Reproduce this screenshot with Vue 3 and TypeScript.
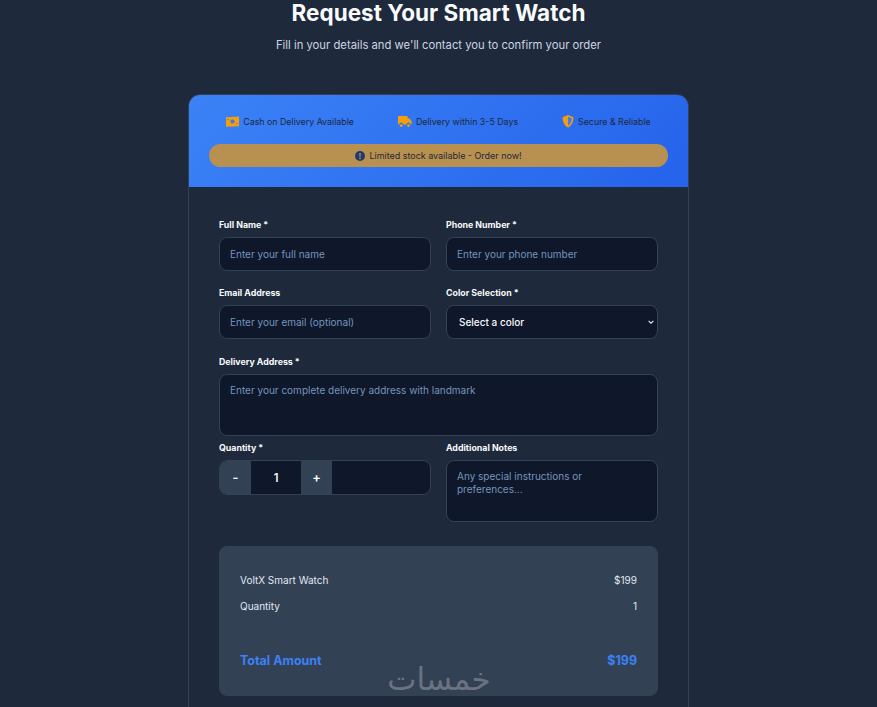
<template>
  <div class="page">
    <h1>Request Your Smart Watch</h1>
    <p class="sub">Fill in your details and we'll contact you to confirm your order</p>

    <div class="card">
      <div class="head">
        <div class="perks">
          <div class="perk">
            <svg width="13" height="11" viewBox="0 0 13 11">
              <path fill="#f59e0b" d="M0 1.200 13 .4v9.800L0 10.800z" />
              <circle cx="6.500" cy="5.500" r="2.100" fill="#3b78f2" />
              <circle cx="2" cy="3.400" r=".7" fill="#3b78f2" />
              <circle cx="11" cy="7.600" r=".7" fill="#3b78f2" />
            </svg>
            <span>Cash on Delivery Available</span>
          </div>
          <div class="perk">
            <svg width="14" height="12" viewBox="0 0 14 12">
              <path fill="#f59e0b" d="M1 0h7.600a1 1 0 0 1 1 1v1.400h1.700l2.200 2.400v3.600h-1a2 2 0 0 0-4 0H5.200a2 2 0 0 0-4 0H0V1a1 1 0 0 1 1-1z" />
              <circle cx="3.200" cy="9.600" r="1.400" fill="#f59e0b" />
              <circle cx="10.500" cy="9.600" r="1.400" fill="#f59e0b" />
            </svg>
            <span>Delivery within 3-5 Days</span>
          </div>
          <div class="perk">
            <svg width="12" height="13" viewBox="0 0 12 13">
              <path fill="#f59e0b" d="M6 0 .6 2.200c0 4.400 1.600 8.400 5.400 10.400 3.800-2 5.400-6 5.400-10.400z" />
              <path fill="#3f7cf0" d="M6 1.800 9.900 3.300C9.700 6.500 8.500 9.200 6 10.700z" />
            </svg>
            <span>Secure &amp; Reliable</span>
          </div>
        </div>
        <div class="stock">
          <svg width="10" height="10" viewBox="0 0 10 10">
            <circle cx="5" cy="5" r="5" fill="#1e3a70" />
            <rect x="4.300" y="2" width="1.400" height="3.800" rx=".5" fill="#b8904f" />
            <circle cx="5" cy="7.300" r=".85" fill="#b8904f" />
          </svg>
          <span>Limited stock available - Order now!</span>
        </div>
      </div>

      <form class="body" @submit.prevent>
        <div class="grid">
          <div class="field first">
            <label>Full Name *</label>
            <input type="text" placeholder="Enter your full name" />
          </div>
          <div class="field first">
            <label>Phone Number *</label>
            <input type="text" placeholder="Enter your phone number" />
          </div>
          <div class="field">
            <label>Email Address</label>
            <input type="text" placeholder="Enter your email (optional)" />
          </div>
          <div class="field">
            <label>Color Selection *</label>
            <div class="select-wrap">
              <select v-model="color">
                <option value="">Select a color</option>
              </select>
              <svg class="chevron" width="6" height="4" viewBox="0 0 6 4">
                <path d="M.6.8 3 3.200 5.400.8" fill="none" stroke="#e2e8f0" stroke-width="1.100" />
              </svg>
            </div>
          </div>
          <div class="field wide">
            <label>Delivery Address *</label>
            <textarea placeholder="Enter your complete delivery address with landmark"></textarea>
          </div>
          <div class="field">
            <label>Quantity *</label>
            <div class="qty">
              <button type="button" @click="changeQty(-1)">-</button>
              <span class="num">{{ qty }}</span>
              <button type="button" @click="changeQty(1)">+</button>
            </div>
          </div>
          <div class="field">
            <label>Additional Notes</label>
            <textarea placeholder="Any special instructions or preferences..."></textarea>
          </div>
        </div>

        <div class="summary">
          <div class="row"><span>VoltX Smart Watch</span><span>$199</span></div>
          <div class="row"><span>Quantity</span><span>{{ qty }}</span></div>
          <div class="row total"><span>Total Amount</span><span>${{ 199 * qty }}</span></div>
          <div class="mark">خمسات</div>
        </div>
      </form>
    </div>
  </div>
</template>

<script setup lang="ts">
import { ref } from 'vue'

const qty = ref(1)
const color = ref('')

const changeQty = (step: number) => {
  qty.value = Math.max(1, qty.value + step)
}
</script>

<style>
html,
body {
  background: #1e293b;
  overflow: hidden;
}
</style>

<style scoped>
.page {
  height: 707px;
  overflow: hidden;
  font-family: Inter, 'Liberation Sans', sans-serif;
  color: #fff;
  background: #1e293b;
  display: flex;
  flex-direction: column;
  align-items: center;
}

h1 {
  margin: 0;
  font-size: 22.5px;
  line-height: 26px;
  font-weight: 700;
  color: #f8fafc;
}

.sub {
  margin: 11px 0 0;
  font-size: 11.28px;
  line-height: 16px;
  color: #cbd5e1;
}

.card {
  width: 501px;
  box-sizing: border-box;
  margin-top: 41px;
  border: 1px solid #334155;
  border-radius: 12px;
  background: #1e293b;
  overflow: hidden;
  flex-shrink: 0;
}

.head {
  background: linear-gradient(135deg, #3b82f6, #2563eb);
  padding: 20px 20px 20px;
}

.perks {
  display: flex;
  justify-content: center;
  gap: 44px;
  height: 13px;
  align-items: center;
}

.perk {
  display: flex;
  align-items: center;
  gap: 4px;
  font-size: 8.84px;
  color: #1e293b;
}

.stock {
  margin-top: 16px;
  height: 23px;
  border-radius: 12px;
  background: #b8904f;
  display: flex;
  align-items: center;
  justify-content: center;
  gap: 4px;
  font-size: 8.96px;
  color: #1e293b;
}

.body {
  padding: 31px 30px 40px;
}

.grid {
  display: grid;
  grid-template-columns: 212px 212px;
  column-gap: 15px;
  align-items: start;
}

.field {
  display: flex;
  flex-direction: column;
  margin-bottom: 16px;
}

.first {
  margin-bottom: 15px;
}

.wide {
  grid-column: 1 / 3;
  margin-bottom: 5px;
}

label {
  font-size: 8.8px;
  line-height: 14px;
  font-weight: 700;
  color: #f8fafc;
  margin-bottom: 5px;
}

input,
select,
textarea {
  box-sizing: border-box;
  width: 100%;
  border: 1px solid #334155;
  border-radius: 8px;
  background: #0f172a;
  color: #f8fafc;
  font-family: inherit;
  font-size: 10px;
  outline: none;
}

input {
  height: 34px;
  padding: 0 10px;
}

select {
  display: block;
  height: 34px;
  padding: 0 12px;
  appearance: none;
  font-weight: 500;
}

.select-wrap {
  position: relative;
}

.chevron {
  position: absolute;
  right: 4px;
  top: 15px;
}

textarea {
  display: block;
  height: 62px;
  padding: 9px 10px;
  line-height: 13px;
  resize: none;
}

::placeholder {
  color: #7495bb;
  opacity: 1;
}

.qty {
  display: flex;
  height: 35px;
  box-sizing: border-box;
  border: 1px solid #334155;
  border-radius: 8px;
  background: #0f172a;
  overflow: hidden;
}

.qty button {
  width: 31px;
  border: 0;
  padding: 0;
  background: #334155;
  color: #f8fafc;
  font-family: inherit;
  font-size: 12.8px;
  font-weight: 600;
}

.num {
  width: 50px;
  display: flex;
  align-items: center;
  justify-content: center;
  font-size: 11.2px;
  font-weight: 600;
  color: #f8fafc;
}

.summary {
  position: relative;
  height: 150px;
  box-sizing: border-box;
  margin-top: 8px;
  padding: 26px 20px 0;
  border-radius: 8px;
  border: 1px solid #334155;
  background: #334155;
}

.row {
  display: flex;
  justify-content: space-between;
  font-size: 10px;
  line-height: 14px;
  color: #e2e8f0;
  margin-bottom: 12px;
}

.total {
  margin-top: 41px;
  font-size: 12.48px;
  font-weight: 700;
  color: #3b82f6;
}

.mark {
  position: absolute;
  left: 160px;
  top: 112px;
  width: 118px;
  text-align: center;
  font-family: 'DejaVu Sans', sans-serif;
  font-size: 31px;
  line-height: 40px;
  color: #6b7280;
}
</style>
